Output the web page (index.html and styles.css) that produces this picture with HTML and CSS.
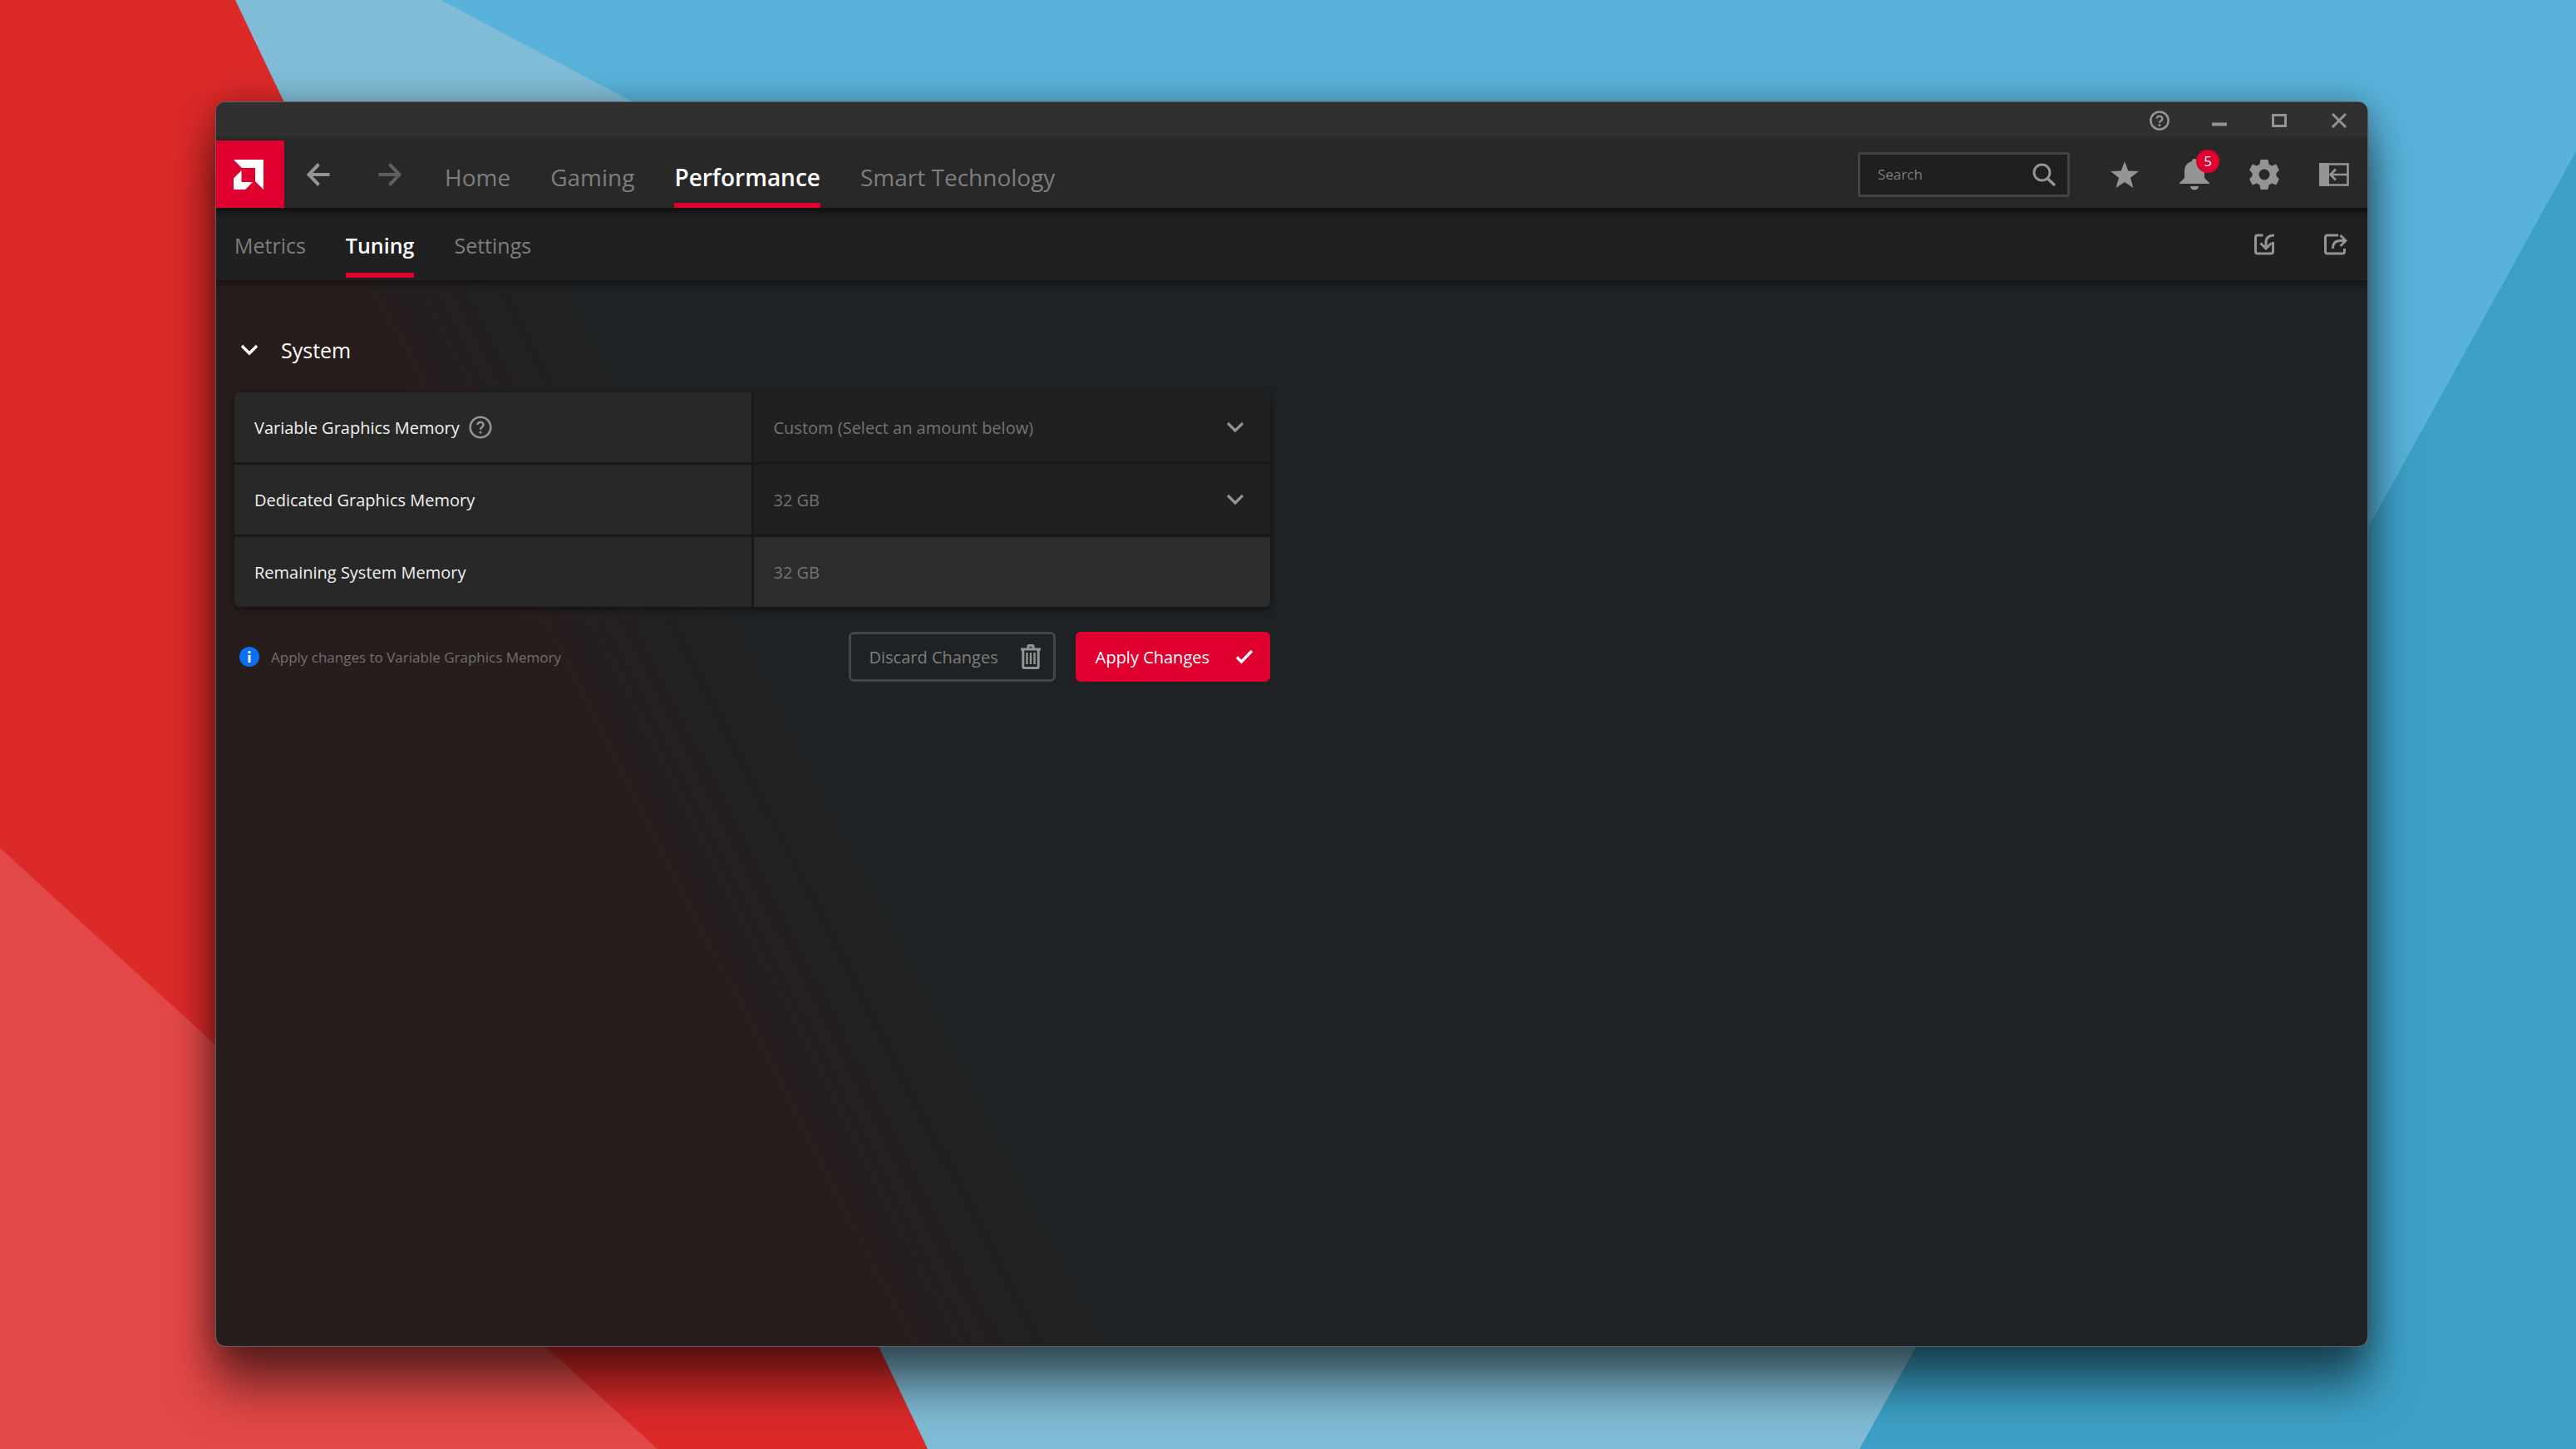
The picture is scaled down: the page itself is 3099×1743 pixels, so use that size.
FILE: index.html
```html
<!DOCTYPE html>
<html lang="en">
<head>
<meta charset="utf-8">
<title>AMD Software: Adrenalin Edition</title>
<link rel="stylesheet" href="styles.css">
</head>
<body>
<svg class="wallpaper" viewBox="0 0 3099 1743" preserveAspectRatio="none" aria-hidden="true">
  <rect width="3099" height="1743" fill="#58b2da"/>
  <path d="M283 0H530L3099 1360V1743H1116Z" fill="#80bcd6"/>
  <path d="M3099 182V1743H2237Z" fill="#3ca0c6"/>
  <path d="M0 0H283L1116 1743H0Z" fill="#dc2a29"/>
  <path d="M0 1020L791 1743H0Z" fill="#e24847"/>
</svg>
<div class="window">
  <div class="titlebar">
    <button class="icon-btn" aria-label="Help"><svg width="24" height="24" viewBox="0 0 24 24"><circle cx="12" cy="12" r="10.600" fill="none" stroke="currentColor" stroke-width="2.500"/><path d="M8.700 9.600a3.300 3 0 1 1 5 2.600c-1.200.8-1.700 1.200-1.700 2.600" fill="none" stroke="currentColor" stroke-width="2.400"/><circle cx="12" cy="17.600" r="1.500" fill="currentColor"/></svg></button>
    <button class="icon-btn" aria-label="Minimize"><svg width="24" height="24" viewBox="0 0 24 24"><path d="M3 14.500h18v4H3z" fill="currentColor"/></svg></button>
    <button class="icon-btn" aria-label="Maximize"><svg width="24" height="24" viewBox="0 0 24 24"><path d="M4.500 5.500h15v13h-15z" fill="none" stroke="currentColor" stroke-width="3"/></svg></button>
    <button class="icon-btn" aria-label="Close"><svg width="24" height="24" viewBox="0 0 24 24"><path d="M4 4l16 16M20 4L4 20" stroke="currentColor" stroke-width="3"/></svg></button>
  </div>
  <header class="navbar">
    <a class="logo" href="#" aria-label="AMD"><svg width="38" height="38" viewBox="0 0 38 38"><path d="M1 1h36v36L27 27V11H11zM10.500 14v14H24l-9 9H1V23.500z" fill="#fff"/></svg></a>
    <div class="history">
      <button class="icon-btn" aria-label="Back"><svg width="28" height="28" viewBox="0 0 28 28"><path d="M27.500 14H3M14.500 1.500L2.500 14l12 12.500" fill="none" stroke="currentColor" stroke-width="4"/></svg></button>
      <button class="icon-btn dim" aria-label="Forward"><svg width="28" height="28" viewBox="0 0 28 28"><path d="M.5 14H25M13.500 1.500L25.500 14l-12 12.500" fill="none" stroke="currentColor" stroke-width="4"/></svg></button>
    </div>
    <nav class="tabs main-tabs">
      <a href="#">Home</a><a href="#">Gaming</a><a href="#" class="active">Performance</a><a href="#">Smart Technology</a>
    </nav>
    <div class="tools">
      <label class="search"><input type="text" placeholder="Search" aria-label="Search"><svg width="28" height="28" viewBox="0 0 28 28"><circle cx="11.500" cy="11.500" r="9.500" fill="none" stroke="currentColor" stroke-width="3"/><path d="M18 18.500l9 8.500" stroke="currentColor" stroke-width="3.400"/></svg></label>
      <button class="icon-btn" aria-label="Favorites"><svg width="36" height="36" viewBox="0 0 36 36"><path d="M18 2l4.300 11.600L35 14l-10 7.800L28.400 34 18 27 7.600 34 11 21.800 1 14l12.700-.4z" fill="currentColor"/></svg></button>
      <button class="icon-btn bell" aria-label="Notifications"><svg width="36" height="38" viewBox="0 0 36 38"><path d="M15 3a3 3 0 0 1 6 0c6 1.500 9 6 9 12v8l6 6v1H0v-1l6-6v-8C6 9 9 4.500 15 3zM13 33h10a5 4.500 0 0 1-10 0z" fill="currentColor"/></svg><span class="badge">5</span></button>
      <button class="icon-btn" aria-label="Settings"><svg width="36" height="36" viewBox="0 0 36 36"><path fill-rule="evenodd" d="M13.500 0h9l1 5.500 3.500 2 5.200-2L36 12.500l-3.500 3.800v3.400L36 23.500 32.200 30.500l-5.200-2-3.500 2-1 5.500h-9l-1-5.500-3.500-2-5.200 2L0 23.500l3.500-3.800v-3.400L0 12.500 3.800 5.500l5.200 2 3.500-2zM18 11.500a6.500 6.500 0 1 0 0 13 6.500 6.500 0 0 0 0-13z" fill="currentColor"/></svg></button>
      <button class="icon-btn" aria-label="Collapse panel"><svg width="36" height="28" viewBox="0 0 36 28"><path d="M0 0h12v28H0z" fill="currentColor"/><path d="M11 1.500h23.500v25H11M34 14H14M20 7.500L13.500 14l6.500 6.500" fill="none" stroke="currentColor" stroke-width="2.600"/></svg></button>
    </div>
  </header>
  <div class="subbar">
    <nav class="tabs sub-tabs">
      <a href="#">Metrics</a><a href="#" class="active">Tuning</a><a href="#">Settings</a>
    </nav>
    <div class="sub-tools">
      <button class="icon-btn" aria-label="Import profile"><svg width="28" height="26" viewBox="0 0 28 26"><path d="M12.500 2H6Q3.500 2 3.500 4.500v17Q3.500 24 6 24h16q2.500 0 2.500-2.500V10M26 2q-10 0-10 9v6M9.500 11.500l6.500 6.500 6.500-6.500" fill="none" stroke="currentColor" stroke-width="3"/></svg></button>
      <button class="icon-btn" aria-label="Export profile"><svg width="28" height="26" viewBox="0 0 28 26"><path d="M17 2H4Q1.500 2 1.500 4.500v17Q1.500 24 4 24h18q2.500 0 2.500-2.500V18M10.500 18q0-9.500 9-9.500h6M19.500 2l6.500 6.500-6.500 6.500" fill="none" stroke="currentColor" stroke-width="3"/></svg></button>
    </div>
  </div>
  <main class="content">
    <section class="panel">
      <h2><button class="section-toggle" aria-expanded="true"><svg width="20" height="20" viewBox="0 0 20 20"><path d="M1 5l9 9 9-9" fill="none" stroke="currentColor" stroke-width="3.400"/></svg>System</button></h2>
      <div class="grid">
        <div class="cell"><label for="vgm">Variable Graphics Memory</label><button class="icon-btn" aria-label="About Variable Graphics Memory"><svg width="28" height="28" viewBox="0 0 28 28"><circle cx="14" cy="14" r="12.300" fill="none" stroke="currentColor" stroke-width="2.600"/><path d="M10.500 11a3.500 3.300 0 1 1 5.300 2.900c-1.300.8-1.800 1.400-1.800 2.900" fill="none" stroke="currentColor" stroke-width="2.500"/><circle cx="14" cy="20" r="1.600" fill="currentColor"/></svg></button></div>
        <div class="cell dark"><select id="vgm"><option>Custom (Select an amount below)</option></select><svg class="chevron" width="20" height="20" viewBox="0 0 20 20"><path d="M1 5l9 9 9-9" fill="none" stroke="currentColor" stroke-width="3.200"/></svg></div>
        <div class="cell"><label for="dgm">Dedicated Graphics Memory</label></div>
        <div class="cell dark"><select id="dgm"><option>32 GB</option></select><svg class="chevron" width="20" height="20" viewBox="0 0 20 20"><path d="M1 5l9 9 9-9" fill="none" stroke="currentColor" stroke-width="3.200"/></svg></div>
        <div class="cell"><span>Remaining System Memory</span></div>
        <div class="cell light"><span>32 GB</span></div>
      </div>
      <div class="actions">
        <p class="hint"><svg width="24" height="24" viewBox="0 0 24 24"><circle cx="12" cy="12" r="12" fill="#0a6ff0"/><path d="M10.500 10h3v9h-3zM10.500 5h3v3h-3z" fill="#fff"/></svg>Apply changes to Variable Graphics Memory</p>
        <button class="btn outline">Discard Changes<svg width="24" height="30" viewBox="0 0 24 30"><path d="M0 4.500h24v3H0zM7.500 5V2Q7.500 0 9.500 0h5q2 0 2 2v3h-3V3h-3v2z" fill="currentColor"/><path d="M2.800 7v20q0 1.500 1.500 1.500h15.400q1.500 0 1.500-1.500V7" fill="none" stroke="currentColor" stroke-width="3"/><path d="M7.500 10v14M12 10v14M16.500 10v14" stroke="currentColor" stroke-width="2.400"/></svg></button>
        <button class="btn primary">Apply Changes<svg width="20" height="20" viewBox="0 0 20 20"><path d="M1 10.500l5.500 5.500L19 3" fill="none" stroke="currentColor" stroke-width="3.400"/></svg></button>
      </div>
    </section>
  </main>
</div>
</body>
</html>
```
FILE: styles.css
```css
* { box-sizing: border-box; }
html, body { height: 100%; margin: 0; }
body {
  display: flex;
  padding: 122px 250px 123px 259px;
  overflow: hidden;
  font-family: "Open Sans", "Noto Sans", sans-serif;
  color: #f0f0f0;
}
.wallpaper { position: absolute; inset: 0; width: 100%; height: 100%; z-index: -1; }
button, input, select { font: inherit; color: inherit; background: none; border: 0; padding: 0; margin: 0; }
a { color: inherit; text-decoration: none; }
svg { display: block; flex: none; }

.window {
  flex: 1;
  display: flex;
  flex-direction: column;
  min-width: 0;
  border: 1px solid #5b6163;
  border-radius: 12px;
  overflow: hidden;
  background: linear-gradient(63deg, #281d1d 24%, #222021 29%, #1e2224 33%);
  box-shadow: 0 48px 56px rgba(0, 0, 0, .5), 0 4px 40px rgba(0, 0, 0, .35);
}
.icon-btn { display: flex; align-items: center; justify-content: center; color: #949494; }
.dim { color: #5f5f5f; }

.titlebar {
  display: flex;
  justify-content: flex-end;
  align-items: center;
  gap: 48px;
  height: 46px;
  padding: 0 22px 2px;
  background: #303030;
}
.navbar {
  position: relative;
  z-index: 2;
  display: flex;
  align-items: stretch;
  height: 81px;
  background: #282828;
  box-shadow: 0 3px 8px 3px rgba(0, 0, 0, .5);
}
.logo { display: flex; align-items: center; justify-content: center; width: 82px; background: #df0030; padding-right: 4px; }
.history { display: flex; align-items: center; gap: 58px; padding: 0 52px 0 27px; }
.tabs { display: flex; gap: 48px; color: #7e7e7e; }
.tabs a { display: flex; align-items: center; border-bottom: 6px solid transparent; }
.tabs .active { color: #fff; font-weight: 600; border-bottom-color: #df0030; }
.main-tabs { font-size: 28px; }
.main-tabs a { padding-top: 12px; }
.tools { display: flex; align-items: center; gap: 48px; margin-left: auto; padding-right: 22px; }
.search {
  display: flex;
  align-items: center;
  width: 255px;
  height: 54px;
  padding: 0 14px 0 21px;
  border: 3px solid #444;
  border-radius: 3px;
  background: #1f1f1f;
  color: #949494;
}
.search input { flex: 1; min-width: 0; font-size: 17px; outline: 0; }
.search input::placeholder { color: #7e7e7e; opacity: 1; }
.bell { position: relative; }
.badge {
  position: absolute;
  top: -11px;
  left: 20px;
  width: 28px;
  height: 28px;
  border-radius: 50%;
  background: #df0030;
  color: #fff;
  font-size: 17px;
  line-height: 28px;
  text-align: center;
}
.subbar {
  position: relative;
  z-index: 1;
  display: flex;
  justify-content: space-between;
  height: 87px;
  padding: 0 24px 3px 22px;
  background: #202020;
  box-shadow: 0 2px 8px 2px rgba(0, 0, 0, .45);
}
.sub-tabs { font-size: 25px; }
.sub-tabs a { padding-top: 12px; }
.sub-tools { display: flex; align-items: center; gap: 58px; padding-top: 4px; }

.content { flex: 1; padding: 62px 22px; }
.panel { width: 1246px; }
h2 { margin: 0; font-size: 25px; font-weight: 400; line-height: 44px; color: #fff; }
.section-toggle { display: flex; align-items: center; gap: 28px; padding-left: 8px; }
.grid {
  display: grid;
  grid-template-columns: 1fr 1fr;
  gap: 3px;
  margin-top: 29px;
  border-radius: 7px;
  overflow: hidden;
  background: #191919;
  box-shadow: 0 3px 10px rgba(0, 0, 0, .5);
  font-size: 20px;
}
.cell { display: flex; align-items: center; gap: 11px; height: 84px; padding: 0 24px; background: #282828; position: relative; }
.dark, .light { color: #737373; }
.dark { background: #202020; }
.light { background: #2c2c2c; }
select { appearance: none; flex: 1; height: 100%; outline: 0; }
.chevron { position: absolute; right: 32px; color: #949494; pointer-events: none; }
.actions { display: flex; align-items: center; gap: 24px; margin-top: 30px; }
.hint { display: flex; align-items: center; gap: 14px; margin: 0 auto 0 6px; font-size: 17px; color: #707070; }
.btn { display: flex; align-items: center; height: 60px; border-radius: 6px; font-size: 20px; }
.outline { gap: 27px; padding: 0 15px 0 21px; border: 3px solid #444; color: #7e7e7e; }
.outline svg { color: #949494; }
.primary { gap: 32px; padding: 0 21px 0 24px; background: #df0030; color: #fff; }
```
